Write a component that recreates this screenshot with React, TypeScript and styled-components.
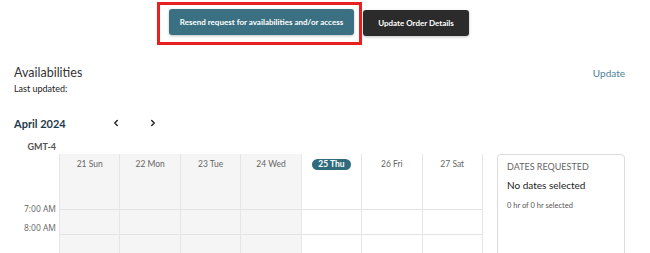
import React from "react";
import styled, { createGlobalStyle } from "styled-components";
import { ChevronLeft, ChevronRight } from "lucide-react";

const GlobalStyle = createGlobalStyle`
  body {
    margin: 0;
    background: #fff;
    font-family: Lato, "Noto Sans", Arial, sans-serif;
    color: #333;
  }
`;

const days = [
  { label: "21 Sun", past: true },
  { label: "22 Mon", past: true },
  { label: "23 Tue", past: true },
  { label: "24 Wed", past: true },
  { label: "25 Thu", today: true },
  { label: "26 Fri" },
  { label: "27 Sat" },
];

const hours = ["7:00 AM", "8:00 AM"];

const Page = styled.div`
  padding: 0 25px 0 14px;
`;

const TopBar = styled.div`
  display: flex;
  align-items: flex-start;
  padding: 2px 0 0 143px;
`;

const Highlight = styled.div`
  border: 3px solid #e8201f;
  padding: 4px 5px 7px 9px;
`;

const Button = styled.button<{ $dark?: boolean }>`
  height: 26px;
  width: ${(p) => (p.$dark ? "106px" : "185px")};
  margin: ${(p) => (p.$dark ? "8px 0 0 1px" : "0")};
  border: none;
  border-radius: 3px;
  background: ${(p) => (p.$dark ? "#2b2b2b" : "#3a7081")};
  color: #fff;
  font-family: Lato, sans-serif;
  font-size: 8px;
  font-weight: 700;
  box-shadow: 0 1px 3px rgba(0, 0, 0, 0.25);
  cursor: pointer;
`;

const SectionHead = styled.div`
  display: flex;
  justify-content: space-between;
  align-items: center;
  margin-top: 20px;
`;

const Title = styled.div`
  font-size: 12.5px;
  line-height: 16px;
  color: #333;
`;

const UpdateLink = styled.a`
  font-size: 10px;
  line-height: 16px;
  color: #4b8196;
  cursor: pointer;
`;

const SubText = styled.div`
  margin-top: 2px;
  font-size: 9px;
  line-height: 12px;
  color: #222;
`;

const MonthRow = styled.div`
  display: flex;
  align-items: center;
  margin-top: 20px;
  height: 16px;
`;

const Month = styled.div`
  width: 97px;
  font-size: 11px;
  font-weight: 700;
  color: #1f3a4a;
`;

const Arrow = styled.span`
  display: flex;
  width: 37px;
  color: #222;
`;

const Zone = styled.div`
  width: 42px;
  margin-top: 10px;
  text-align: right;
  font-size: 9px;
  font-weight: 700;
  line-height: 12px;
  color: #555;
`;

const Calendar = styled.div`
  display: flex;
  align-items: flex-start;
  margin-top: 1px;
`;

const TimeCol = styled.div`
  width: 45px;
  flex-shrink: 0;
  padding-top: 55px;
`;

const TimeSlot = styled.div`
  height: 25px;
  text-align: right;
  padding-right: 3px;
`;

const TimeLabel = styled.span`
  display: block;
  margin-top: -6px;
  font-family: "Open Sans", sans-serif;
  font-size: 8.5px;
  line-height: 12px;
  color: #666;
`;

const Grid = styled.div`
  display: grid;
  grid-template-columns: repeat(7, 1fr);
  width: 423px;
  flex-shrink: 0;
  border-right: 1px solid #e6e6e6;
`;

const DayCol = styled.div<{ $past?: boolean }>`
  border-left: 1px solid #e6e6e6;
  background: ${(p) => (p.$past ? "#f5f5f5" : "#fff")};
`;

const DayHead = styled.div`
  height: 55px;
  display: flex;
  justify-content: center;
  padding-top: 5px;
  box-sizing: border-box;
`;

const DayLabel = styled.span<{ $today?: boolean }>`
  height: 11px;
  line-height: 11px;
  padding: 0 ${(p) => (p.$today ? "6px" : "0")};
  border-radius: 6px;
  background: ${(p) => (p.$today ? "#2f6b7c" : "transparent")};
  color: ${(p) => (p.$today ? "#fff" : "#666")};
  font-size: 8.5px;
  font-weight: ${(p) => (p.$today ? 700 : 400)};
`;

const Cell = styled.div`
  height: 25px;
  box-sizing: border-box;
  border-top: 1px solid #e3e3e3;
`;

const Panel = styled.div`
  margin-left: 14px;
  width: 129px;
  height: 110px;
  box-sizing: border-box;
  border: 1px solid #dcdcdc;
  border-radius: 4px;
  padding: 6px 9px;
`;

const PanelTitle = styled.div`
  font-size: 9px;
  line-height: 12px;
  color: #666;
  text-transform: uppercase;
`;

const PanelMain = styled.div`
  margin-top: 6px;
  font-size: 10px;
  line-height: 12px;
  color: #222;
`;

const PanelNote = styled.div`
  margin-top: 10px;
  font-size: 7.5px;
  line-height: 10px;
  color: #555;
`;

export default function App() {
  return (
    <>
      <GlobalStyle />
      <Page>
        <TopBar>
          <Highlight>
            <Button>Resend request for availabilities and/or access</Button>
          </Highlight>
          <Button $dark>Update Order Details</Button>
        </TopBar>

        <SectionHead>
          <Title>Availabilities</Title>
          <UpdateLink>Update</UpdateLink>
        </SectionHead>
        <SubText>Last updated:</SubText>

        <MonthRow>
          <Month>April 2024</Month>
          <Arrow>
            <ChevronLeft size={10} strokeWidth={3.5} />
          </Arrow>
          <Arrow>
            <ChevronRight size={10} strokeWidth={3.5} />
          </Arrow>
        </MonthRow>

        <Zone>GMT-4</Zone>

        <Calendar>
          <TimeCol>
            {hours.map((h) => (
              <TimeSlot key={h}>
                <TimeLabel>{h}</TimeLabel>
              </TimeSlot>
            ))}
          </TimeCol>
          <Grid>
            {days.map((d) => (
              <DayCol key={d.label} $past={d.past}>
                <DayHead>
                  <DayLabel $today={d.today}>{d.label}</DayLabel>
                </DayHead>
                {hours.map((h) => (
                  <Cell key={h} />
                ))}
              </DayCol>
            ))}
          </Grid>
          <Panel>
            <PanelTitle>Dates Requested</PanelTitle>
            <PanelMain>No dates selected</PanelMain>
            <PanelNote>0 hr of 0 hr selected</PanelNote>
          </Panel>
        </Calendar>
      </Page>
    </>
  );
}
